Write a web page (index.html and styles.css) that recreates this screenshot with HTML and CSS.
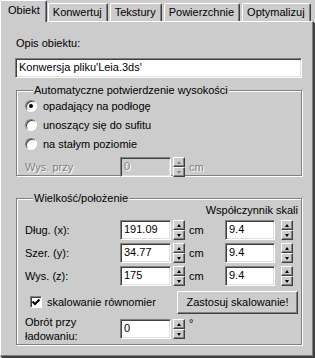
FILE: index.html
```html
<!DOCTYPE html>
<html lang="pl">

<head>
    <meta charset="UTF-8">
    <meta name="viewport" content="width=device-width, initial-scale=1.0">
    <title>Obiekt</title>
    <link rel="stylesheet" href="styles.css">
</head>

<body>

    <div class="tabs">
        <div class="tab tabActive">Obiekt</div>
        <div class="tab">Konwertuj</div>
        <div class="tab">Tekstury</div>
        <div class="tab">Powierzchnie</div>
        <div class="tab">Optymalizuj</div>
    </div>

    <div class="panel">
        <div class="caption">Opis obiektu:</div>
        <div class="field fieldWide">Konwersja pliku'Leia.3ds'</div>

        <fieldset class="group groupHeight">
            <legend>Automatyczne potwierdzenie wysokości</legend>
            <div class="option">
                <span class="radio radioOn"></span>
                <span>opadający na podłogę</span>
            </div>
            <div class="option">
                <span class="radio"></span>
                <span>unoszący się do sufitu</span>
            </div>
            <div class="option">
                <span class="radio"></span>
                <span>na stałym poziomie</span>
            </div>
            <div class="row rowDisabled">
                <div class="rowLabel">Wys. przy</div>
                <div class="field fieldNum fieldDisabled">0</div>
                <div class="spin spinDisabled">
                    <span class="spinBtn spinUp"></span>
                    <span class="spinBtn spinDown"></span>
                </div>
                <div class="unit">cm</div>
            </div>
        </fieldset>

        <fieldset class="group groupSize">
            <legend>Wielkość/położenie</legend>
            <div class="scaleHead">Współczynnik skali</div>

            <div class="row">
                <div class="rowLabel">Dług. (x):</div>
                <div class="field fieldNum">191.09</div>
                <div class="spin">
                    <span class="spinBtn spinUp"></span>
                    <span class="spinBtn spinDown"></span>
                </div>
                <div class="unit">cm</div>
                <div class="field fieldScale">9.4</div>
                <div class="spin">
                    <span class="spinBtn spinUp"></span>
                    <span class="spinBtn spinDown"></span>
                </div>
            </div>

            <div class="row">
                <div class="rowLabel">Szer. (y):</div>
                <div class="field fieldNum">34.77</div>
                <div class="spin">
                    <span class="spinBtn spinUp"></span>
                    <span class="spinBtn spinDown"></span>
                </div>
                <div class="unit">cm</div>
                <div class="field fieldScale">9.4</div>
                <div class="spin">
                    <span class="spinBtn spinUp"></span>
                    <span class="spinBtn spinDown"></span>
                </div>
            </div>

            <div class="row">
                <div class="rowLabel">Wys. (z):</div>
                <div class="field fieldNum">175</div>
                <div class="spin">
                    <span class="spinBtn spinUp"></span>
                    <span class="spinBtn spinDown"></span>
                </div>
                <div class="unit">cm</div>
                <div class="field fieldScale">9.4</div>
                <div class="spin">
                    <span class="spinBtn spinUp"></span>
                    <span class="spinBtn spinDown"></span>
                </div>
            </div>

            <div class="rowScale">
                <div class="check">
                    <span class="checkBox">
                        <svg width="8" height="8" viewBox="0 0 8 8">
                            <path d="M0.5 3.5 L3 6 L7.5 1.5" stroke="#000" stroke-width="2" fill="none" />
                        </svg>
                    </span>
                    <span>skalowanie równomier</span>
                </div>
                <div class="button">Zastosuj skalowanie!</div>
            </div>

            <div class="row rowRotate">
                <div class="rowLabel">Obrót przy<br>ładowaniu:</div>
                <div class="field fieldNum">0</div>
                <div class="spin">
                    <span class="spinBtn spinUp"></span>
                    <span class="spinBtn spinDown"></span>
                </div>
                <div class="unit unitDeg">°</div>
            </div>
        </fieldset>
    </div>

</body>

</html>
```

FILE: styles.css
```css
body {
    margin: 0;
    width: 315px;
    height: 358px;
    overflow: hidden;
    background: #cccccc;
    font-family: 'Liberation Sans', Arial, sans-serif;
    font-size: 11px;
    color: #000;
}

/* tabs */

.tabs {
    display: flex;
    align-items: flex-end;
    height: 21px;
    padding-left: 2px;
}

.tab {
    height: 17px;
    line-height: 17px;
    padding: 0 5px 0 4px;
    margin-right: 2px;
    border: 1px solid #fff;
    border-right-color: #404040;
    border-bottom: none;
    border-radius: 2px 2px 0 0;
    box-shadow: inset -1px 0 0 #808080;
    white-space: nowrap;
}

.tabActive {
    position: relative;
    z-index: 1;
    height: 21px;
    line-height: 19px;
    margin: 0 1px -1px -2px;
    padding: 0 6px 0 7px;
    background: #cccccc;
}

/* panel */

.panel {
    box-sizing: border-box;
    width: 313px;
    height: 335px;
    padding: 15px 0 0 14px;
    border-top: 1px solid #fff;
    border-left: 1px solid #fff;
    border-right: 1px solid #808080;
    border-bottom: 1px solid #808080;
    box-shadow: 1px 1px 0 #404040, 2px 2px 0 #404040;
}

.caption {
    height: 13px;
    line-height: 13px;
    padding-left: 1px;
}

.field {
    box-sizing: border-box;
    height: 20px;
    line-height: 17px;
    padding: 0 3px;
    background: #fff;
    border: 1px solid;
    border-color: #808080 #fff #fff #808080;
    box-shadow: inset 1px 1px 0 #404040, inset -1px -1px 0 #dfdfdf;
    white-space: nowrap;
    overflow: hidden;
}

.fieldWide {
    width: 287px;
    margin-top: 8px;
}

.fieldNum {
    width: 51px;
}

.fieldScale {
    width: 50px;
    margin-right: 4px;
}

.fieldDisabled {
    background: #cccccc;
    color: #808080;
    text-shadow: 1px 1px 0 #fff;
}

/* group boxes */

.group {
    box-sizing: border-box;
    width: 286px;
    margin: 0 0 0 1px;
    padding: 0 0 0 8px;
    border: 1px solid #808080;
    box-shadow: 1px 1px 0 #fff, inset 1px 1px 0 #fff;
}

.group legend {
    margin-left: 8px;
    padding: 0 1px;
    line-height: 12px;
    background: #cccccc;
}

.groupHeight {
    margin-top: 6px;
    height: 92px;
}

.groupSize {
    margin-top: 16px;
    height: 153px;
}

.option {
    display: flex;
    align-items: center;
    height: 19px;
}

.radio {
    box-sizing: border-box;
    width: 12px;
    height: 12px;
    margin-right: 6px;
    border-radius: 50%;
    background: #fff;
    border: 1px solid;
    border-color: #808080 #fff #fff #808080;
    box-shadow: inset 1px 1px 0 #404040;
    display: flex;
    align-items: center;
    justify-content: center;
}

.radioOn::after {
    content: '';
    width: 4px;
    height: 4px;
    border-radius: 50%;
    background: #000;
}

/* rows with number fields */

.row {
    display: flex;
    align-items: center;
    height: 20px;
    margin-top: 3px;
}

.rowLabel {
    width: 95px;
    line-height: 14px;
}

.rowDisabled {
    margin-top: 4px;
}

.rowDisabled .rowLabel,
.rowDisabled .unit {
    color: #808080;
    text-shadow: 1px 1px 0 #fff;
}

.rowRotate {
    height: 28px;
    margin-top: 2px;
}

.unit {
    width: 40px;
    padding-left: 4px;
    box-sizing: border-box;
}

.unitDeg {
    align-self: flex-start;
    margin-top: 2px;
}

.scaleHead {
    text-align: right;
    padding-right: 3px;
    line-height: 14px;
    height: 14px;
    margin-top: -1px;
}

/* spin buttons */

.spin {
    display: flex;
    flex-direction: column;
    justify-content: space-between;
    width: 12px;
    height: 20px;
    margin-left: 2px;
}

.spinBtn {
    box-sizing: border-box;
    height: 10px;
    border: 1px solid;
    border-color: #fff #404040 #404040 #fff;
    box-shadow: inset -1px -1px 0 #808080;
    display: flex;
    align-items: center;
    justify-content: center;
}

.spinBtn::after {
    content: '';
    border-left: 2px solid transparent;
    border-right: 2px solid transparent;
}

.spinUp::after {
    border-bottom: 3px solid #000;
}

.spinDown::after {
    border-top: 3px solid #000;
}

.spinDisabled .spinUp::after {
    border-bottom-color: #808080;
}

.spinDisabled .spinDown::after {
    border-top-color: #808080;
}

/* scaling row */

.rowScale {
    display: flex;
    align-items: center;
    height: 22px;
    margin-top: 5px;
}

.check {
    display: flex;
    align-items: center;
    width: 147px;
    padding-left: 5px;
}

.checkBox {
    box-sizing: border-box;
    width: 12px;
    height: 12px;
    margin-right: 5px;
    background: #fff;
    border: 1px solid;
    border-color: #808080 #fff #fff #808080;
    box-shadow: inset 1px 1px 0 #404040;
    display: flex;
    align-items: center;
    justify-content: center;
}

.button {
    box-sizing: border-box;
    width: 121px;
    height: 23px;
    line-height: 21px;
    text-align: center;
    border: 1px solid;
    border-color: #fff #404040 #404040 #fff;
    box-shadow: inset -1px -1px 0 #808080;
}
```
